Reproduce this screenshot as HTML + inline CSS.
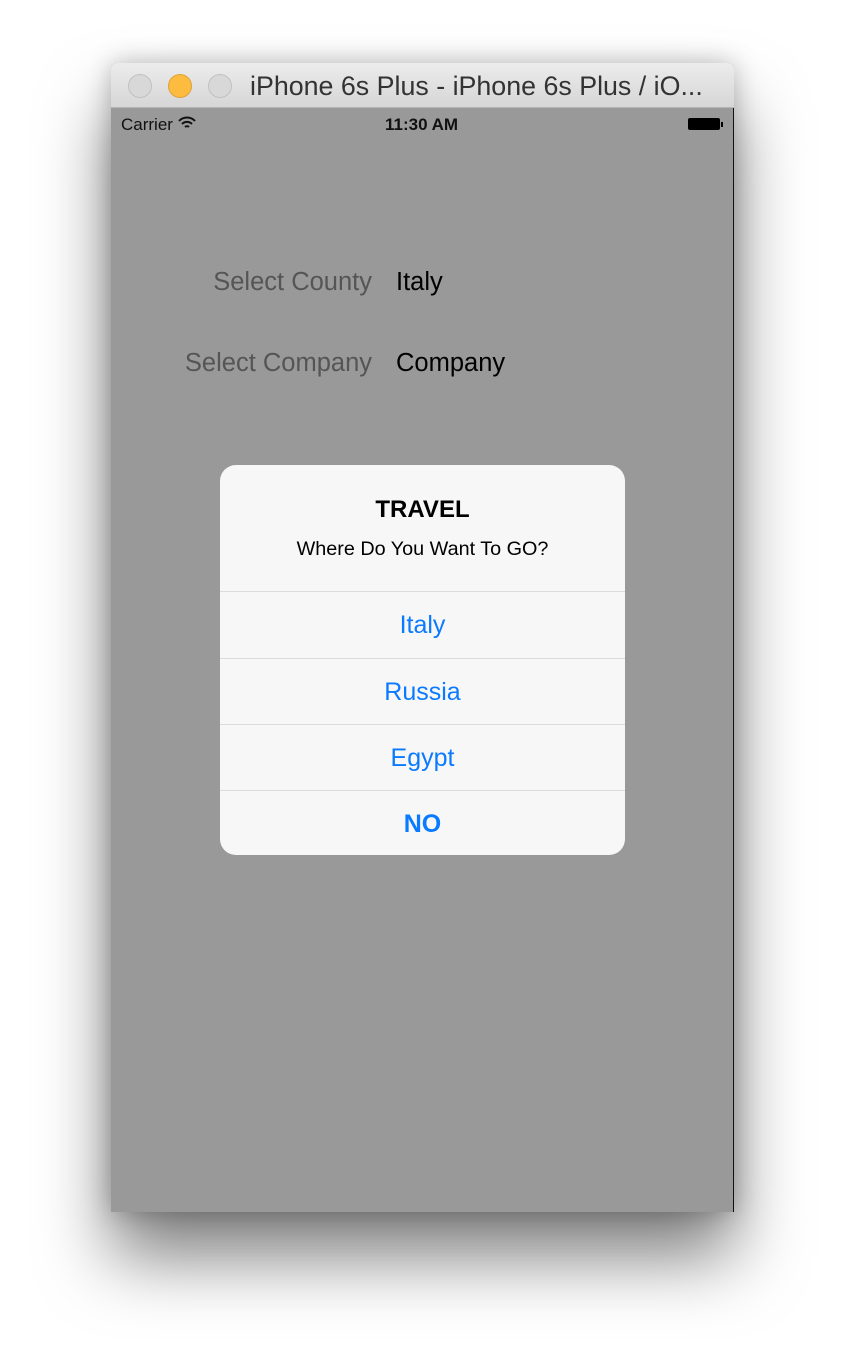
<!DOCTYPE html>
<html><head><style>
html,body{margin:0;padding:0;background:#fff;width:846px;height:1372px;overflow:hidden;font-family:"Liberation Sans",sans-serif}
.win{position:absolute;left:111px;top:63px;width:623px;height:1149px;border-radius:6px 6px 0 0;box-shadow:0 45px 70px rgba(0,0,0,0.5),0 0 25px rgba(0,0,0,0.25);overflow:hidden;background:#999}
.tb{position:absolute;left:0;top:0;width:623px;height:44px;background:linear-gradient(#ececec,#d6d6d6);border-bottom:1px solid #b5b5b5}
.dot{position:absolute;top:11px;width:24px;height:24px;border-radius:50%;background:#d8d8d8;border:1px solid #c0c0c0;box-sizing:border-box}
.title{position:absolute;left:139px;top:8px;font-size:26.8px;color:#333}
.scr{position:absolute;left:0;top:45px;width:622px;height:1104px;background:#999;border-right:1px solid #111}
.t{position:absolute;white-space:nowrap}
.lab{position:absolute;right:361px;font-size:25.5px;color:#555;white-space:nowrap}
.alert{position:absolute;left:109px;top:357px;width:405px;height:390px;background:#f7f7f7;border-radius:16px;overflow:hidden}
.btn{position:absolute;left:0;width:405px;height:66px;border-top:1px solid #dcdcdc;text-align:center;line-height:66px;font-size:25px;color:#0a7aff}
</style></head><body>
<div class="win">
<div class="tb">
<div class="dot" style="left:17px"></div>
<div class="dot" style="left:57px;background:#fdbc40;border-color:#dea236"></div>
<div class="dot" style="left:97px"></div>
<div class="title">iPhone 6s Plus - iPhone 6s Plus / iO...</div>
</div>
<div class="scr">
<div class="t" style="left:10px;top:7px;font-size:17px;color:#111">Carrier <svg width="18" height="14" viewBox="0 0 18 14" style="vertical-align:0"><path d="M1 5a11 11 0 0 1 16 0M4 8a7 7 0 0 1 10 0M7 11a3 3 0 0 1 4 0" stroke="#111" stroke-width="2" fill="none"/></svg></div>
<div class="t" style="left:274px;top:7px;font-size:17px;font-weight:bold;color:#111">11:30 AM</div>
<div class="t" style="left:577px;top:10px;width:32px;height:12px;background:#000;border-radius:2px"></div>
<div class="t" style="left:610px;top:14px;width:2px;height:5px;background:#000"></div>
<div class="lab" style="top:160px">Select County</div>
<div class="t" style="left:285px;top:160px;font-size:25.5px;color:#000">Italy</div>
<div class="lab" style="top:241px">Select Company</div>
<div class="t" style="left:285px;top:241px;font-size:25.5px;color:#000">Company</div>
<div class="alert">
<div class="t" style="left:0;width:405px;text-align:center;top:31px;font-size:24px;font-weight:bold;color:#000">TRAVEL</div>
<div class="t" style="left:0;width:405px;text-align:center;top:73px;font-size:19.8px;color:#000">Where Do You Want To GO?</div>
<div class="btn" style="top:126px">Italy</div>
<div class="btn" style="top:193px">Russia</div>
<div class="btn" style="top:259px">Egypt</div>
<div class="btn" style="top:325px;font-weight:bold">NO</div>
</div>
</div>
</div>
</body></html>
